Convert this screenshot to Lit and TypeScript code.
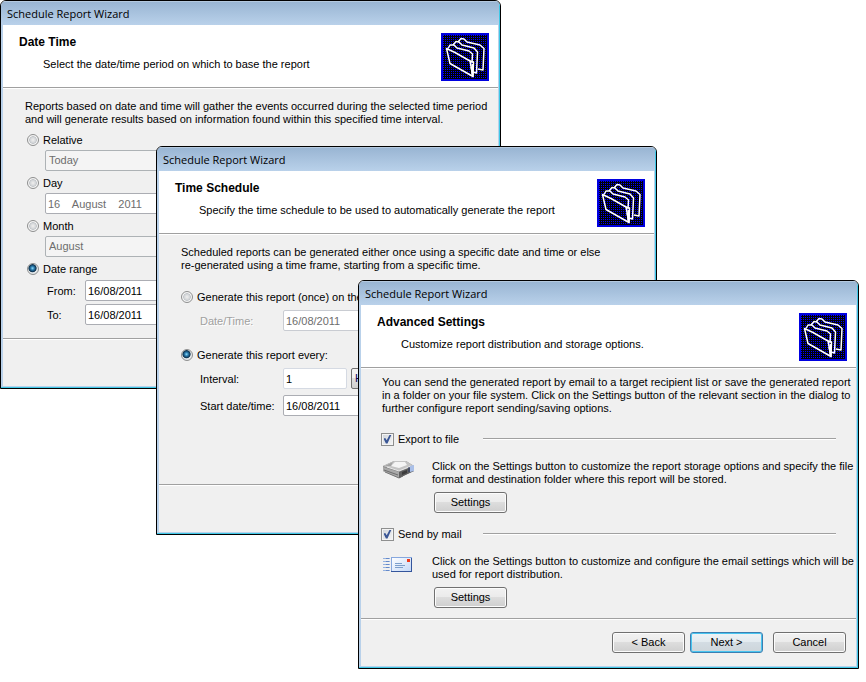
import { LitElement, html, css, svg } from "lit";
import { customElement, property } from "lit/decorators.js";

const diskIcon = svg`
  <svg width="33" height="20" viewBox="0 0 33 20" aria-hidden="true">
    <path d="M1 6 L12 1 L24 1 L32 6 L32 11 L17 18 L1 11 Z" fill="#8b8b8b"/>
    <path d="M1 6 L12 1 L24 1 L32 6 L17 11 Z" fill="#c4c4c4"/>
    <path d="M9 6 L13 2 L23 2 L25 5 L17 8 Z" fill="#f4f4f4"/>
    <path d="M3 6 L11 2 L9 6 Z" fill="#a2a2a2"/>
    <path d="M5 7 L17 11 L29 6" fill="none" stroke="#e6e6e6"/>
    <path d="M1 7 L17 12 L17 18 L1 11 Z" fill="#a9a9a9"/>
    <path d="M2 10 L16 15" stroke="#6e6e6e" fill="none"/>
    <path d="M3 12 L17 18 L21 16" stroke="#777" fill="none"/>
    <path d="M17 12 L32 6 L32 11 L17 18 Z" fill="#5f5f5f"/>
    <path d="M20 12 L25 10 L25 13 L20 15 Z" fill="#3c3c3c"/>
    <path d="M28 6 L32 5 L32 11 L28 12 Z" fill="#a9bfe8"/>
    <path d="M27 7 L27 12" stroke="#2d3c66" fill="none"/>
  </svg>`;

const mailIcon = svg`
  <svg width="33" height="20" viewBox="0 0 33 20" aria-hidden="true">
    <defs>
      <linearGradient id="paper" x1="0" y1="0" x2="1" y2="1">
        <stop offset="0" stop-color="#ffffff"/><stop offset="1" stop-color="#c3d8f8"/>
      </linearGradient>
    </defs>
    <path d="M1 3.5h7M1 6.5h7M1 9.5h7M1 12.5h7M1 15.5h7" stroke="#94b1e0"/>
    <path d="M4 3.5h3M4 6.5h3M4 9.5h3M4 12.5h3M4 15.5h3" stroke="#6489c9"/>
    <rect x="9.5" y="2.5" width="20" height="14" fill="url(#paper)" stroke="#86a7de"/>
    <path d="M9 16.5h21M29.5 3v14" stroke="#34559c" fill="none"/>
    <rect x="25" y="4" width="3" height="3" fill="#ee3a1c"/>
    <path d="M13 8.5h7M13 10.5h10M13 12.5h8" stroke="#7d9fcb"/>
  </svg>`;

const folderIcon = svg`
  <svg width="48" height="48" viewBox="0 0 48 48" aria-hidden="true">
    <defs>
      <pattern id="dots" width="2" height="2" patternUnits="userSpaceOnUse">
        <rect width="2" height="2" fill="#000008"/>
        <rect width="1" height="1" fill="#0000ff" shape-rendering="crispEdges"/>
      </pattern>
    </defs>
    <rect width="48" height="48" fill="url(#dots)"/>
    <rect x="1" y="1" width="46" height="46" fill="none" stroke="#0000e0" stroke-width="2"/>
    <g fill="none" stroke="#fff" stroke-width="1.5" stroke-linejoin="round">
      <path d="M17 9 L20 5.5 L23 6 L26 9 L39 12 L43 15.5 L42 37 L37 36"/>
      <path d="M12 12 L15 8.5 L18 9 L21 12 L33 15 L36.5 19 L35.5 40 L32 39"/>
      <path d="M7 15.5 L9 12 L13 12 L16 15 L28 18 L31.5 21 L31 30"/>
      <path d="M5.5 15.5 L9 30.5 L32 43.5 L29 28 L14 19.5 Z"/>
      <path d="M29 28 L32.5 29 L32 43.5 L30 34"/>
      <path d="M31.5 31 V42" stroke-width="2"/>
    </g>
  </svg>`;

const controls = css`
  * { box-sizing: border-box; }
  p, h2 { margin: 0; }
  input, select, button { font: inherit; color: inherit; margin: 0; }
  input[type="radio"] {
    appearance: none;
    flex: none;
    width: 12px;
    height: 12px;
    border: 1px solid #8e8f8f;
    border-radius: 50%;
    background: radial-gradient(circle, #e9e9e9 10%, #d2d5d8 40%, #b9bdc1 48%, #f4f4f4 58%);
  }
  input[type="radio"]:checked {
    background: radial-gradient(circle at 45% 42%, #8fdcf8 0, #2b7db0 22%, #0c2f4b 46%, #e4e8ea 56%);
  }
  input[type="checkbox"] {
    appearance: none;
    flex: none;
    display: grid;
    place-items: center;
    width: 13px;
    height: 13px;
    border: 1px solid #8e8f8f;
    background: linear-gradient(135deg, #cfd4da, #f6f6f6);
    box-shadow: inset 0 0 0 1px #f4f4f4;
  }
  input[type="checkbox"]:checked::before {
    content: "";
    width: 8px;
    height: 9px;
    background: #3a5695;
    clip-path: polygon(0 45%, 22% 40%, 40% 65%, 78% 0, 100% 0, 50% 100%, 30% 100%);
  }
  .field {
    appearance: none;
    display: block;
    height: 21px;
    padding: 0 2px;
    border: 1px solid #abadb3;
    border-radius: 2px;
    background: #fff;
    line-height: 19px;
  }
  .field:disabled { color: #6d6d6d; opacity: 1; }
  select.field:disabled { background: #f4f4f4; padding: 0 3px; border-color: #adb2b5; }
  button {
    width: 73px;
    height: 21px;
    padding: 0;
    border: 1px solid #707070;
    border-radius: 3px;
    background: linear-gradient(#f2f2f2 0, #ebebeb 48%, #dddddd 50%, #cfcfcf 100%);
    box-shadow: inset 0 0 0 1px #fcfcfc;
    line-height: 19px;
  }
  button.primary {
    border-color: #3c7fb1;
    background: linear-gradient(#eef3f6 0, #e2eaef 48%, #d3dce3 50%, #cdd5da 100%);
    box-shadow: inset 0 0 0 1px #48c5f0;
  }
  .intro { line-height: 13px; white-space: nowrap; }
  .choice { display: flex; align-items: center; gap: 4px; height: 20px; white-space: nowrap; }
`;

@customElement("wizard-dialog")
export class WizardDialog extends LitElement {
  @property() heading = "";
  @property() summary = "";

  static styles = css`
    * { box-sizing: border-box; }
    :host {
      display: flex;
      flex-direction: column;
      box-sizing: border-box;
      min-height: 389px;
      overflow: hidden;
      border: 1px solid #000;
      border-radius: 6px 6px 0 0;
      background: #b9d1ea;
      font: 11px/16px "Liberation Sans", Arial, sans-serif;
      color: #000;
    }
    .frame {
      flex: 1;
      display: flex;
      flex-direction: column;
      padding: 0 1px 1px 2px;
      border: solid #3fc8e6;
      border-width: 0 1px 1px 0;
      background: linear-gradient(#98b4d2, #b9d1ea 24px);
    }
    .title {
      height: 24px;
      padding: 0 4px;
      border-top: 1px solid #b4c9df;
      font: 11px/23px "Open Sans", "Segoe UI", sans-serif;
      white-space: nowrap;
    }
    .head {
      display: flex;
      justify-content: space-between;
      height: 63px;
      padding: 8px 9px 0 16px;
      border-bottom: 1px solid #a0a0a0;
      background: #fff;
    }
    h2 { margin: 0; font-size: 12px; line-height: 18px; }
    .summary { margin: 5px 0 0 24px; line-height: 16px; white-space: nowrap; }
    .body { flex: 1; border-top: 1px solid #fff; background: #f0f0f0; }
    .foot {
      display: flex;
      justify-content: flex-end;
      height: 48px;
      padding: 13px 10px 0;
      border-top: 1px solid #a0a0a0;
      background: #f0f0f0;
      box-shadow: inset 0 1px #fff;
    }
    p { margin: 0; }
  `;

  render() {
    return html`
      <div class="frame">
        <header class="title">Schedule Report Wizard</header>
        <div class="head">
          <div>
            <h2>${this.heading}</h2>
            <p class="summary">${this.summary}</p>
          </div>
          ${folderIcon}
        </div>
        <div class="body"><slot></slot></div>
        <footer class="foot"><slot name="actions"></slot></footer>
      </div>`;
  }
}

@customElement("date-time-step")
export class DateTimeStep extends LitElement {
  static styles = [
    controls,
    css`
      :host { display: block; padding: 11px 0 0 22px; }
      .options { display: grid; gap: 2px; margin-top: 4px; padding-left: 2px; }
      .option .field { margin-left: 18px; width: 240px; }
      .range { display: grid; grid-template-columns: 38px 120px; gap: 3px 0; margin: 1px 0 0 20px; align-items: center; }
    `,
  ];
  render() {
    return html`
      <p class="intro">
        Reports based on date and time will gather the events occurred during the selected time period<br />
        and will generate results based on information found within this specified time interval.
      </p>
      <div class="options">
        <div class="option">
          <label class="choice"><input type="radio" name="period" />Relative</label>
          <select class="field" aria-label="Relative period" disabled><option>Today</option></select>
        </div>
        <div class="option">
          <label class="choice"><input type="radio" name="period" />Day</label>
          <input class="field" aria-label="Day" value="16    August    2011" disabled />
        </div>
        <div class="option">
          <label class="choice"><input type="radio" name="period" />Month</label>
          <select class="field" aria-label="Month" disabled><option>August</option></select>
        </div>
        <div>
          <label class="choice"><input type="radio" name="period" checked />Date range</label>
          <div class="range">
            <label for="from">From:</label><input class="field" id="from" value="16/08/2011" />
            <label for="to">To:</label><input class="field" id="to" value="16/08/2011" />
          </div>
        </div>
      </div>`;
  }
}

@customElement("time-schedule-step")
export class TimeScheduleStep extends LitElement {
  static styles = [
    controls,
    css`
      :host { display: block; padding: 11px 0 0 22px; }
      .group { margin-top: 14px; }
      .intro + .group { margin-top: 15px; }
      .rows { display: grid; grid-template-columns: 83px 1fr; gap: 6px 0; margin: 3px 0 0 19px; align-items: center; white-space: nowrap; }
      .off { color: #a0a0a0; text-shadow: 1px 1px #fff; }
      .interval { display: flex; gap: 4px; }
      .interval input { width: 64px; border-color: #d5dae3; }
      .interval select {
        width: 90px;
        padding: 0 3px;
        border-color: #707070;
        background: linear-gradient(#f2f2f2 48%, #dddddd 50%, #cfcfcf);
        color: #000050;
      }
      .date { width: 120px; }
      .date:disabled { border-color: #c9ccd2; }
    `,
  ];
  render() {
    return html`
      <p class="intro">
        Scheduled reports can be generated either once using a specific date and time or else<br />
        re-generated using a time frame, starting from a specific time.
      </p>
      <div class="group">
        <label class="choice"><input type="radio" name="mode" />Generate this report (once) on the</label>
        <div class="rows">
          <label class="off" for="once">Date/Time:</label>
          <input class="field date" id="once" value="16/08/2011" disabled />
        </div>
      </div>
      <div class="group">
        <label class="choice"><input type="radio" name="mode" checked />Generate this report every:</label>
        <div class="rows">
          <label for="interval">Interval:</label>
          <div class="interval">
            <input class="field" id="interval" value="1" />
            <select class="field" aria-label="Interval unit"><option>Hours</option></select>
          </div>
          <label for="start">Start date/time:</label>
          <input class="field date" id="start" value="16/08/2011" />
        </div>
      </div>`;
  }
}

@customElement("advanced-settings-step")
export class AdvancedSettingsStep extends LitElement {
  static styles = [
    controls,
    css`
      :host { display: block; padding: 7px 0 0 20px; }
      .intro { padding-left: 1px; }
      section { margin-top: 11px; }
      .intro + section { margin-top: 14px; }
      .row { display: flex; align-items: center; padding-right: 20px; }
      .row .choice { flex: none; min-width: 102px; }
      .row::after { content: ""; flex: 1; height: 2px; background: linear-gradient(#a0a0a0 50%, #fff 50%); }
      .detail { display: grid; grid-template-columns: 49px 1fr; margin: 11px 0 0 1px; }
      .detail svg { grid-row: span 2; }
      .detail button { margin: 6px 0 0 3px; }
    `,
  ];
  render() {
    return html`
      <p class="intro">
        You can send the generated report by email to a target recipient list or save the generated report<br />
        in a folder on your file system. Click on the Settings button of the relevant section in the dialog to<br />
        further configure report sending/saving options.
      </p>
      <section>
        <div class="row"><label class="choice"><input type="checkbox" checked />Export to file</label></div>
        <div class="detail">
          ${diskIcon}
          <p class="intro">
            Click on the Settings button to customize the report storage options and specify the file<br />
            format and destination folder where this report will be stored.
          </p>
          <button type="button">Settings</button>
        </div>
      </section>
      <section>
        <div class="row"><label class="choice"><input type="checkbox" checked />Send by mail</label></div>
        <div class="detail">
          ${mailIcon}
          <p class="intro">
            Click on the Settings button to customize and configure the email settings which will be<br />
            used for report distribution.
          </p>
          <button type="button">Settings</button>
        </div>
      </section>`;
  }
}

@customElement("app-root")
export class AppRoot extends LitElement {
  static styles = [
    controls,
    css`
      :host { display: grid; align-items: start; background: #fff; }
      wizard-dialog { grid-area: 1 / 1; width: calc(100% - 365px); min-width: 501px; }
      .second { margin: 146px 0 0 156px; }
      .third { margin: 280px 0 0 358px; }
      .actions { display: flex; gap: 5px; }
      .cancel { margin-left: 5px; }
    `,
  ];
  render() {
    return html`
      <wizard-dialog class="first" heading="Date Time" summary="Select the date/time period on which to base the report">
        <date-time-step></date-time-step>
      </wizard-dialog>
      <wizard-dialog
        class="second"
        heading="Time Schedule"
        summary="Specify the time schedule to be used to automatically generate the report"
      >
        <time-schedule-step></time-schedule-step>
      </wizard-dialog>
      <wizard-dialog class="third" heading="Advanced Settings" summary="Customize report distribution and storage options.">
        <advanced-settings-step></advanced-settings-step>
        <div class="actions" slot="actions">
          <button type="button">&lt; Back</button>
          <button type="button" class="primary">Next &gt;</button>
          <button type="button" class="cancel">Cancel</button>
        </div>
      </wizard-dialog>`;
  }
}
